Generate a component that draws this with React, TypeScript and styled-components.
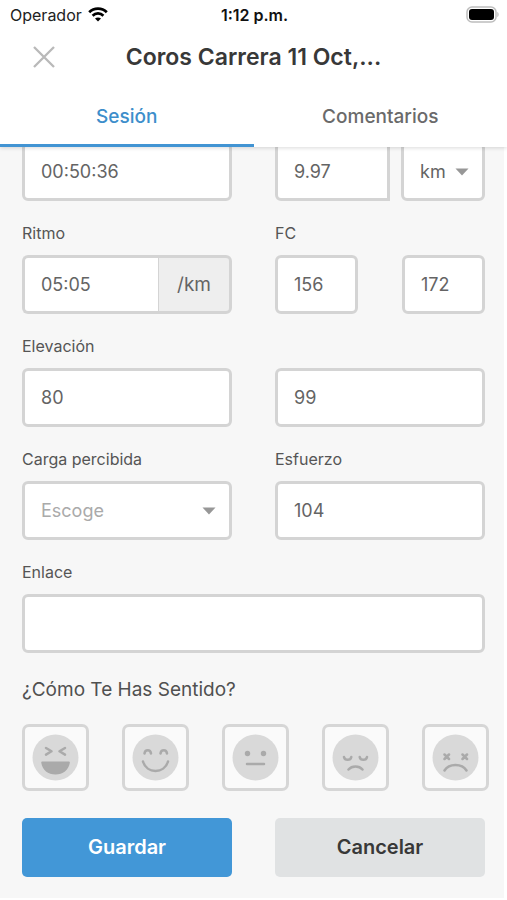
import React from "react";
import styled, { createGlobalStyle } from "styled-components";

const GlobalStyle = createGlobalStyle`
  * { box-sizing: border-box; }
  body { margin: 0; background: #fff; }
  body, button, input, select { font-family: Inter, "Liberation Sans", sans-serif; }
`;

const Header = styled.header`
  position: sticky;
  top: 0;
  z-index: 2;
  background: #fff;
  box-shadow: 0 1px 4px rgba(0, 0, 0, 0.15);
`;

const StatusBar = styled.div`
  display: grid;
  grid-template-columns: 1fr auto 1fr;
  align-items: center;
  height: 29px;
  padding: 0 8px 0 10px;
  font-size: 16px;
  color: #222;
`;

const Carrier = styled.span`
  display: flex;
  align-items: center;
  gap: 6px;
`;

const Clock = styled.time`
  font-weight: 600;
  color: #111;
`;

const Battery = styled.span`
  display: flex;
  justify-content: flex-end;
`;

const TitleBar = styled.div`
  display: grid;
  grid-template-columns: 88px 1fr 88px;
  align-items: center;
  height: 56px;
`;

const CloseButton = styled.button`
  display: flex;
  justify-content: center;
  padding: 8px;
  border: 0;
  background: none;
`;

const Title = styled.h1`
  margin: 0;
  font-size: 23px;
  line-height: 28px;
  font-weight: 600;
  text-align: center;
  white-space: nowrap;
  color: #383838;
`;

const Tabs = styled.div`
  display: grid;
  grid-template-columns: 1fr 1fr;
`;

const Tab = styled.button<{ $active?: boolean }>`
  height: 62px;
  padding: 3px 0 0;
  border: 0;
  border-bottom: 3px solid ${(p) => (p.$active ? "#4294d3" : "transparent")};
  background: none;
  font-size: 19px;
  font-weight: 500;
  color: ${(p) => (p.$active ? "#3d8ecb" : "#6a6a6a")};
`;

const Form = styled.form`
  margin-top: -5px;
  padding: 0 19px 21px 22px;
  border-right: 3px solid #fff;
  background: #f7f7f7;
`;

const Columns = styled.div`
  display: grid;
  grid-template-columns: 1fr 1fr;
  column-gap: 43px;
`;

const Field = styled.div`
  display: flex;
  flex-direction: column;
  min-width: 0;
`;

const Label = styled.label`
  height: 54px;
  padding: 20px 0 10px;
  font-size: 16px;
  line-height: 24px;
  color: #555;
`;

const Group = styled.div<{ $columns: string; $gap: number }>`
  display: grid;
  grid-template-columns: ${(p) => p.$columns};
  column-gap: ${(p) => p.$gap}px;
`;

const Input = styled.input<{ $edge?: "square" | "joined" }>`
  width: 100%;
  min-width: 0;
  height: 59px;
  padding: 0 16px;
  border: 3px solid #d4d4d4;
  border-right-width: ${(p) => (p.$edge === "joined" ? 0 : 3)}px;
  border-radius: ${(p) => (p.$edge ? "6px 0 0 6px" : "6px")};
  background: #fff;
  font-size: 18px;
  color: #646464;
`;

const Unit = styled.span`
  display: flex;
  align-items: center;
  justify-content: center;
  border: 3px solid #d4d4d4;
  border-left-width: 1px;
  border-radius: 0 6px 6px 0;
  background: #eee;
  font-size: 19px;
  color: #646464;
`;

const SelectBox = styled.div`
  position: relative;
`;

const Select = styled.select<{ $empty?: boolean }>`
  width: 100%;
  height: 59px;
  padding: 0 30px 0 16px;
  appearance: none;
  border: 3px solid #d4d4d4;
  border-radius: 6px;
  background: #fff;
  font-size: 18px;
  color: ${(p) => (p.$empty ? "#aaa" : "#646464")};
`;

const Caret = styled.svg`
  position: absolute;
  top: 26px;
  right: 16px;
  pointer-events: none;
`;

const Question = styled.h2`
  margin: 0;
  padding: 25px 0 22px;
  font-size: 19px;
  line-height: 24px;
  font-weight: 400;
  color: #505050;
`;

const Moods = styled.div`
  display: flex;
  justify-content: space-between;
  margin-right: -4px;
`;

const MoodButton = styled.button`
  display: flex;
  align-items: center;
  justify-content: center;
  width: 67px;
  height: 67px;
  padding: 0;
  border: 3px solid #d6d6d6;
  border-radius: 7px;
  background: #fafafa;
`;

const Actions = styled(Columns)`
  margin-top: 27px;
`;

const Action = styled.button<{ $primary?: boolean }>`
  height: 59px;
  padding: 0 0 2px;
  border: 0;
  border-radius: 5px;
  background: ${(p) => (p.$primary ? "#4297d7" : "#e0e2e3")};
  font-size: 20px;
  font-weight: 600;
  color: ${(p) => (p.$primary ? "#fff" : "#383838")};
`;

const Arrow = () => (
  <Caret width="14" height="8" viewBox="0 0 14 8" aria-hidden="true">
    <path d="M0.5 0.5h13L7 7.5z" fill="#979797" />
  </Caret>
);

const moods = [
  {
    name: "Genial",
    face: (
      <>
        <path d="M14 14l5.500 3.300-5.500 3.300M33 14l-5.500 3.300 5.500 3.300" />
        <path d="M10.500 27.500h26c1 0 1.500.5 1.300 1.500C36.500 36 31 40.500 23.500 40.500S10.500 36 9.300 29c-.2-1 .2-1.500 1.200-1.500z" fill="#aaa" stroke="none" />
      </>
    ),
  },
  {
    name: "Bien",
    face: <path d="M12.500 19.500c.5-4.500 6-4.500 6.500 0M28.500 19.500c.5-4.500 6-4.500 6.500 0M11 27.500c3.500 12.500 21.500 12.500 25 0" />,
  },
  {
    name: "Normal",
    face: (
      <>
        <circle cx="15.500" cy="19.500" r="2.700" fill="#aaa" stroke="none" />
        <circle cx="31.500" cy="19.500" r="2.700" fill="#aaa" stroke="none" />
        <path d="M15 30h17" />
      </>
    ),
  },
  {
    name: "Mal",
    face: <path d="M12 23c.8 3.800 6.500 3.800 7.300 0M27.700 23c.8 3.800 6.500 3.800 7.300 0M16.500 35.500c3.500-4 10.500-4 14 0" />,
  },
  {
    name: "Fatal",
    face: <path d="M12.500 20.500l4.500 4.500M17 20.500l-4.500 4.500M30.500 20.500l4.500 4.500M35 20.500l-4.500 4.500M12.500 36.500c4.500-7.300 17.500-7.300 22 0" />,
  },
];

export default function App() {
  return (
    <>
      <GlobalStyle />
      <Header>
        <StatusBar>
          <Carrier>
            Operador
            <svg width="20" height="15" viewBox="0 0 20 15" fill="none" stroke="#000" strokeWidth="2.700" aria-hidden="true">
              <path d="M1.200 5.300C6 .4 14 .4 18.800 5.300M4.600 8.700c3-3 7.800-3 10.800 0" />
              <path d="M10 14.500l-3-3c1.700-1.500 4.300-1.500 6 0z" fill="#000" stroke="none" />
            </svg>
          </Carrier>
          <Clock>1:12 p.m.</Clock>
          <Battery>
            <svg width="33" height="17" viewBox="0 0 33 17" aria-hidden="true">
              <rect x="1" y="1" width="29" height="15" rx="5" fill="#fff" stroke="#bdbdbd" strokeWidth="1.500" />
              <rect x="3" y="3" width="25" height="11" rx="3" fill="#000" />
              <path d="M31.300 6c1.800.5 1.800 4.500 0 5z" fill="#bdbdbd" />
            </svg>
          </Battery>
        </StatusBar>
        <TitleBar>
          <CloseButton type="button" aria-label="Cerrar">
            <svg width="22" height="22" viewBox="0 0 22 22" stroke="#b9b9b9" strokeWidth="2.300" aria-hidden="true">
              <path d="M1 1l20 20M21 1L1 21" />
            </svg>
          </CloseButton>
          <Title>Coros Carrera 11 Oct,...</Title>
        </TitleBar>
        <Tabs role="tablist">
          <Tab type="button" role="tab" aria-selected="true" $active>Sesión</Tab>
          <Tab type="button" role="tab" aria-selected="false">Comentarios</Tab>
        </Tabs>
      </Header>
      <Form>
        <Columns>
          <Field>
            <Input aria-label="Duración" defaultValue="00:50:36" />
          </Field>
          <Group $columns="115fr 84fr" $gap={11}>
            <Input aria-label="Distancia" defaultValue="9.97" $edge="square" />
            <SelectBox>
              <Select aria-label="Unidad de distancia">
                <option>km</option>
              </Select>
              <Arrow />
            </SelectBox>
          </Group>
          <Field>
            <Label htmlFor="pace">Ritmo</Label>
            <Group $columns="1fr 74px" $gap={0}>
              <Input id="pace" defaultValue="05:05" $edge="joined" />
              <Unit>/km</Unit>
            </Group>
          </Field>
          <Field>
            <Label htmlFor="hr">FC</Label>
            <Group $columns="1fr 1fr" $gap={44}>
              <Input id="hr" defaultValue="156" />
              <Input aria-label="FC máxima" defaultValue="172" />
            </Group>
          </Field>
          <Field>
            <Label htmlFor="gain">Elevación</Label>
            <Input id="gain" defaultValue="80" />
          </Field>
          <Field>
            <Label as="span" />
            <Input aria-label="Elevación negativa" defaultValue="99" />
          </Field>
          <Field>
            <Label htmlFor="load">Carga percibida</Label>
            <SelectBox>
              <Select id="load" $empty>
                <option>Escoge</option>
              </Select>
              <Arrow />
            </SelectBox>
          </Field>
          <Field>
            <Label htmlFor="effort">Esfuerzo</Label>
            <Input id="effort" defaultValue="104" />
          </Field>
        </Columns>
        <Field>
          <Label htmlFor="link">Enlace</Label>
          <Input id="link" type="url" />
        </Field>
        <Question>¿Cómo Te Has Sentido?</Question>
        <Moods>
          {moods.map((mood) => (
            <MoodButton key={mood.name} type="button" aria-label={mood.name}>
              <svg width="47" height="47" viewBox="0 0 47 47" fill="none" stroke="#aaa" strokeWidth="2.500" strokeLinecap="round" strokeLinejoin="round" aria-hidden="true">
                <circle cx="23.500" cy="23.500" r="23" fill="#d9d9d9" stroke="none" />
                {mood.face}
              </svg>
            </MoodButton>
          ))}
        </Moods>
        <Actions>
          <Action type="button" $primary>Guardar</Action>
          <Action type="button">Cancelar</Action>
        </Actions>
      </Form>
    </>
  );
}
